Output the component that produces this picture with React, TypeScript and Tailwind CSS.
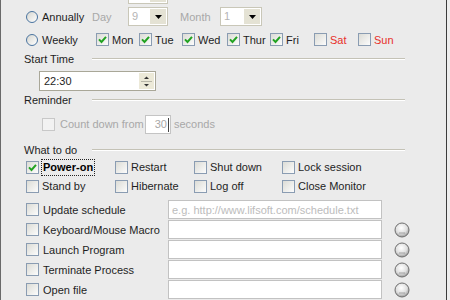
import React from 'react';

const Check = ({ checked = false, disabled = false }: { checked?: boolean; disabled?: boolean }) => (
  <span
    className={`flex h-[13px] w-[13px] shrink-0 items-center justify-center border ${
      disabled ? 'border-[#c8c8c8] bg-[#f2f2f2]' : 'border-[#8a9cb2] bg-linear-to-br from-[#dcdcd6] to-[#fcfcfc]'
    }`}
  >
    {checked && (
      <svg width="9" height="9" viewBox="0 0 9 9">
        <path d="M1 4.4 L3.5 7 L8 1.8" fill="none" stroke="#22a322" strokeWidth="2" />
      </svg>
    )}
  </span>
);

const Radio = () => (
  <span className="h-[12px] w-[12px] shrink-0 rounded-full border border-[#4a74a0] bg-linear-to-br from-[#d6d6d0] to-white" />
);

const Combo = ({ value, w }: { value: string; w: string }) => (
  <div className={`flex h-[19px] border border-[#c9c7b8] bg-white ${w}`}>
    <span className="flex-1 pl-[3px] leading-[17px] text-[#b4b4b4]">{value}</span>
    <span className="m-[1px] flex w-[16px] items-center justify-center bg-[#e4e2d4]">
      <svg width="7" height="4" viewBox="0 0 7 4">
        <path d="M0 0H7L3.5 4Z" fill="#000" />
      </svg>
    </span>
  </div>
);

const Day = ({ label, checked, red, w }: { label: string; checked?: boolean; red?: boolean; w: string }) => (
  <div className={`flex items-center ${w}`}>
    <Check checked={checked} />
    <span className={`ml-[3px] ${red ? 'text-[#e8302a]' : ''}`}>{label}</span>
  </div>
);

const Header = ({ label, className = '' }: { label: string; className?: string }) => (
  <div className={`flex h-[14px] items-center pl-[23px] ${className}`}>
    <span className="w-[68px]">{label}</span>
    <div className="h-[2px] w-[313px] border-t border-b border-t-[#c4c2b6] border-b-white" />
  </div>
);

const Option = ({ label, w }: { label: string; w: string }) => (
  <div className={`flex items-center ${w}`}>
    <Check />
    <span className="ml-[3px]">{label}</span>
  </div>
);

const Browse = ({ id }: { id: string }) => (
  <svg width="16" height="16" viewBox="0 0 16 16">
    <defs>
      <radialGradient id={id} cx="45%" cy="35%" r="65%">
        <stop offset="0" stopColor="#ffffff" />
        <stop offset="0.6" stopColor="#e0e0e0" />
        <stop offset="1" stopColor="#9a9a9a" />
      </radialGradient>
    </defs>
    <circle cx="8" cy="8" r="7" fill={`url(#${id})`} stroke="#6e6e6e" strokeWidth="1" />
    <rect x="5.5" y="10.5" width="1" height="1" fill="#666" />
    <rect x="7.5" y="10.5" width="1" height="1" fill="#666" />
    <rect x="9.5" y="10.5" width="1" height="1" fill="#666" />
  </svg>
);

const tasks = [
  { label: 'Update schedule', placeholder: 'e.g. http://www.lifsoft.com/schedule.txt', browse: false },
  { label: 'Keyboard/Mouse Macro', placeholder: '', browse: true },
  { label: 'Launch Program', placeholder: '', browse: true },
  { label: 'Terminate Process', placeholder: '', browse: true },
  { label: 'Open file', placeholder: '', browse: true },
];

export default function App() {
  return (
    <div className="flex h-[300px] w-[450px] overflow-hidden bg-[#ebebeb] font-['Liberation_Sans',Arial,sans-serif] text-[11px] text-[#1e1e1e]">
      <div className="flex h-full w-[447px] shrink-0 flex-col border-l border-r border-l-[#6a6a6a] border-r-[#3c3c3c]">
        {/* row scrolled off the top: only the bottom of its combo shows */}
        <div className="-mt-[15px] flex h-[19px] items-center pl-[127px]">
          <Combo value="" w="w-[40px]" />
        </div>

        <div className="mt-[1px] flex h-[25px] items-center pl-[25px]">
          <Radio />
          <span className="ml-[4px] w-[50px]">Annually</span>
          <span className="w-[36px] text-[#a8a8a8]">Day</span>
          <Combo value="9" w="w-[40px]" />
          <span className="ml-[12px] w-[40px] text-[#a8a8a8]">Month</span>
          <Combo value="1" w="w-[42px]" />
        </div>

        <div className="flex h-[24px] items-center pl-[25px]">
          <Radio />
          <span className="ml-[4px] w-[54px]">Weekly</span>
          <Day label="Mon" checked w="w-[43px]" />
          <Day label="Tue" checked w="w-[43px]" />
          <Day label="Wed" checked w="w-[45px]" />
          <Day label="Thur" checked w="w-[43px]" />
          <Day label="Fri" checked w="w-[44px]" />
          <Day label="Sat" red w="w-[44px]" />
          <Day label="Sun" red w="w-[44px]" />
        </div>

        <Header label="Start Time" className="mt-[1px]" />

        <div className="ml-[38px] mt-[5px] flex h-[20px] w-[117px] border border-[#a9a798] bg-white">
          <span className="flex-1 pl-[4px] leading-[18px]">22:30</span>
          <span className="m-[1px] flex w-[15px] bg-[#ece9d8]">
            <svg width="15" height="16" viewBox="0 0 15 16">
              <path d="M5 6H10L7.5 3.5Z" fill="#333" />
              <line x1="2" y1="8.5" x2="13" y2="8.5" stroke="#b8b6a8" />
              <path d="M5 11H10L7.5 13.5Z" fill="#333" />
            </svg>
          </span>
        </div>

        <Header label="Reminder" className="mt-[2px]" />

        <div className="mt-[8px] flex h-[20px] items-center pl-[41px]">
          <Check disabled />
          <span className="ml-[5px] w-[85px] text-[#a8a8a8]">Count down from</span>
          <div className="flex h-[19px] w-[26px] items-center justify-end border border-[#c4c4c4] bg-white pr-[1px] text-[#a8a8a8]">
            30
            <span className="ml-[1px] h-[14px] w-[1px] bg-[#444]" />
          </div>
          <span className="ml-[3px] text-[#a8a8a8]">seconds</span>
        </div>

        <Header label="What to do" className="mt-[9px]" />

        <div className="mt-[2px] flex h-[18px] items-center pl-[25px]">
          <div className="flex w-[89px] items-center">
            <Check checked />
            <span className="ml-[2px] border border-dotted border-[#222] px-[1px] font-bold leading-[15px] text-black">
              Power-on
            </span>
          </div>
          <Option label="Restart" w="w-[79px]" />
          <Option label="Shut down" w="w-[88px]" />
          <Option label="Lock session" w="w-[90px]" />
        </div>

        <div className="mt-[2px] flex h-[18px] items-center pl-[25px]">
          <Option label="Stand by" w="w-[89px]" />
          <Option label="Hibernate" w="w-[79px]" />
          <Option label="Log off" w="w-[88px]" />
          <Option label="Close Monitor" w="w-[90px]" />
        </div>

        <div className="mt-[5px] flex flex-col">
          {tasks.map((t, i) => (
            <div key={t.label} className="flex h-[20px] items-center pl-[25px]">
              <Check />
              <span className="ml-[4px] w-[125px]">{t.label}</span>
              <div className="flex h-[19px] w-[214px] items-center border border-[#c2c2c2] bg-white pl-[3px] text-[#bcbcbc]">
                {t.placeholder}
              </div>
              {t.browse && (
                <span className="ml-[12px] flex">
                  <Browse id={`browse-${i}`} />
                </span>
              )}
            </div>
          ))}
        </div>
      </div>
      <div className="h-full flex-1 bg-[#eeeeee]" />
    </div>
  );
}
